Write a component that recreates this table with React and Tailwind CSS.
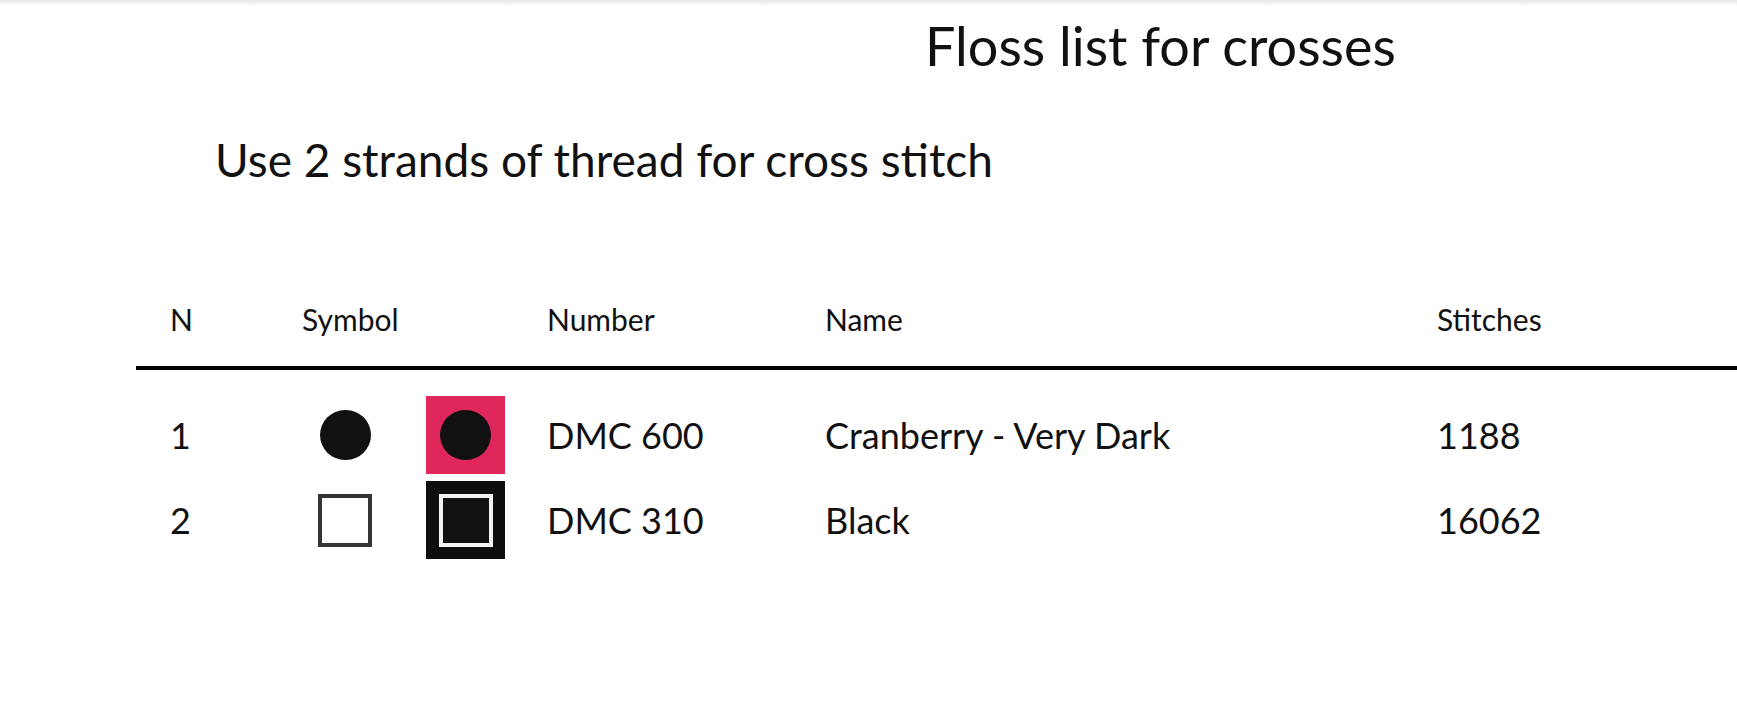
import React from "react";

const font = { fontFamily: "Lato, 'Open Sans', sans-serif" };

function CircleSym() {
  return <div className="w-[51px] h-[50px] rounded-full bg-[#111111] blur-[0.6px]" />;
}

function SquareSym({ light }) {
  return (
    <div
      className={
        "w-[54px] h-[53px] border-[4px] blur-[0.5px] " +
        (light ? "border-[#f2f2f2] bg-[#111111]" : "border-[#333333] bg-white")
      }
    />
  );
}

const rows = [
  { n: "1", num: "DMC 600", name: "Cranberry - Very Dark", st: "1188", color: "bg-[#e0275c]", kind: "circle" },
  { n: "2", num: "DMC 310", name: "Black", st: "16062", color: "bg-[#0e0e0e]", kind: "square" },
];

export default function App() {
  return (
    <div className="w-[1737px] h-[724px] overflow-hidden bg-white text-[#111111] relative" style={font}>
      <div className="absolute top-0 left-0 right-0 h-[6px] bg-gradient-to-b from-[#e6e6e6] to-transparent" />
      <div className="pt-[14px] pl-[925px] text-[54px] leading-[64px] whitespace-nowrap">Floss list for crosses</div>
      <div className="mt-[54px] pl-[215px] text-[46px] leading-[56px] whitespace-nowrap">Use 2 strands of thread for cross stitch</div>
      <div className="mt-[113px] ml-[136px] w-[1700px]">
        <div className="grid grid-cols-[166px_245px_278px_612px_1fr] border-b-[4px] border-black pb-[29px] text-[30px] leading-[36px]">
          <div className="pl-[34px]">N</div>
          <div>Symbol</div>
          <div>Number</div>
          <div>Name</div>
          <div>Stitches</div>
        </div>
        <div className="pt-[26px] flex flex-col gap-[7px]">
          {rows.map((r) => (
            <div key={r.n} className="grid grid-cols-[166px_245px_278px_612px_1fr] items-center h-[78px] text-[36px]">
              <div className="pl-[34px]">{r.n}</div>
              <div className="flex items-center">
                <div className="w-[86px] flex justify-center">
                  {r.kind === "circle" ? <CircleSym /> : <SquareSym />}
                </div>
                <div className={"ml-[38px] w-[79px] h-[78px] flex items-center justify-center " + r.color}>
                  {r.kind === "circle" ? <CircleSym /> : <SquareSym light />}
                </div>
              </div>
              <div>{r.num}</div>
              <div>{r.name}</div>
              <div>{r.st}</div>
            </div>
          ))}
        </div>
      </div>
    </div>
  );
}
